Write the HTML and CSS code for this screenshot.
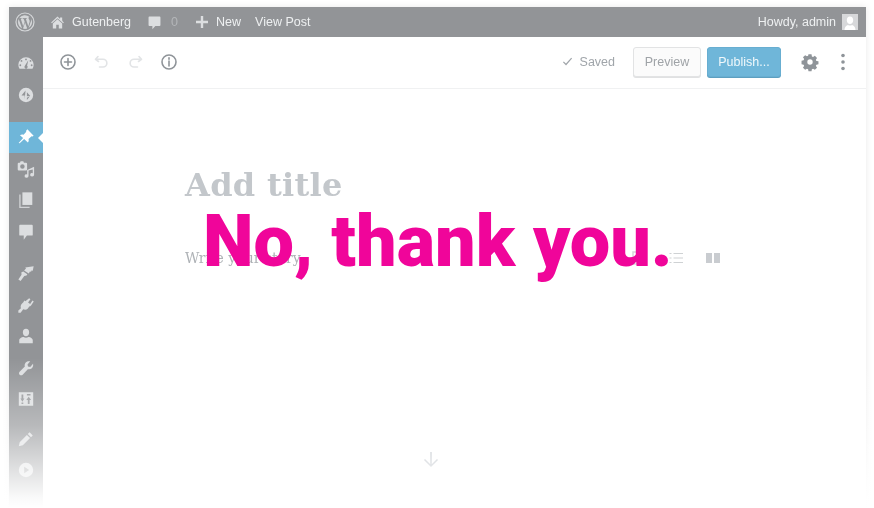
FILE: index.html
```html
<!DOCTYPE html>
<html lang="en">
<head>
<meta charset="utf-8">
<title>Gutenberg</title>
<link rel="stylesheet" href="styles.css">
</head>
<body>
<div class="window">
  <header class="adminbar">
    <svg class="wp" viewBox="0 0 20 20"><circle cx="10" cy="10" r="9" fill="none" stroke="#d5d7d9" stroke-width="1.2"/><path fill="#d5d7d9" d="M3 10c0 2.8 1.6 5.2 4 6.3L3.700 7.100A7 7 0 0 0 3 10zm11.700-.4c0-.9-.3-1.500-.6-2-.3-.6-.6-1-.6-1.500 0-.6.400-1.100 1-1.100h.1A7 7 0 0 0 4.100 6.200h.5c.7 0 1.900-.1 1.900-.1.400 0 .4.500 0 .6 0 0-.4.100-.8.100l2.500 7.500 1.500-4.600-1.100-2.900c-.4 0-.7-.1-.7-.1-.4 0-.3-.6 0-.6 0 0 1.100.1 1.800.1s1.900-.1 1.900-.1c.4 0 .4.500 0 .6 0 0-.4.100-.8.100l2.500 7.400.7-2.300c.3-1 .6-1.700.6-2.300zm-4.600 1-2.100 6a7 7 0 0 0 4.300-.1l-.1-.1zm6-3.900.1.700c0 .7-.1 1.500-.5 2.500l-2.100 6.200A7 7 0 0 0 16.100 6.700z"/></svg>
    <nav class="bar-left">
      <span class="bar-item home"><svg class="bar-icon" viewBox="0 0 20 20"><path d="M16 8.500l1.500 1.500-.9 1L10 4.900 3.400 11l-.9-1L10 3l3 2.800V4h2.500v3.400zM10 6.300l5.500 5V17h-4v-4.500h-3V17h-4v-5.700z"/></svg>Gutenberg</span>
      <span class="bar-item comments"><svg class="bar-icon" viewBox="0 0 20 20"><path d="M4 3h12a1 1 0 0 1 1 1v9a1 1 0 0 1-1 1h-5l-3.500 4v-4H4a1 1 0 0 1-1-1V4a1 1 0 0 1 1-1z"/></svg><span class="count">0</span></span>
      <span class="bar-item new"><svg class="bar-icon small" viewBox="0 0 14 14"><path d="M5.800 1h2.400v4.800H13v2.400H8.200V13H5.800V8.200H1V5.800h4.800z"/></svg>New</span>
      <span class="bar-item">View Post</span>
    </nav>
    <div class="howdy">Howdy, admin
      <svg class="avatar" viewBox="0 0 16 16"><rect width="16" height="16" fill="#d7d8da"/><path fill="#fff" d="M8 2.500a3.200 3.800 0 0 1 3.200 3.800c0 2.100-1.400 3.700-3.200 3.700S4.800 8.400 4.800 6.300A3.200 3.800 0 0 1 8 2.500zM2.500 16c0-3 2-4.500 3.500-5 1 .7 3 .7 4 0 1.500.5 3.500 2 3.500 5z"/></svg>
    </div>
  </header>
  <div class="body">
    <aside class="sidebar">
      <div class="menu-group">
        <div class="menu-item"><svg viewBox="0 0 20 20"><path d="M10 3.500a8.500 8.500 0 0 0-8.500 8.500c0 1.700.5 3.200 1.300 4.500h14.400c.8-1.300 1.300-2.800 1.300-4.500A8.500 8.500 0 0 0 10 3.500zM10 5a1 1 0 1 1 0 2 1 1 0 0 1 0-2zM5 6.700a1 1 0 1 1 0 2 1 1 0 0 1 0-2zm10 0a1 1 0 1 1 0 2 1 1 0 0 1 0-2zM3.700 11.500a1 1 0 1 1 0 2 1 1 0 0 1 0-2zm12.600 0a1 1 0 1 1 0 2 1 1 0 0 1 0-2zM12.500 7l-1.300 6a1.800 1.800 0 1 1-2.400.1z"/></svg></div>
        <div class="menu-item"><svg viewBox="0 0 20 20"><path fill-rule="evenodd" d="M10 2a8 8 0 1 1 0 16 8 8 0 0 1 0-16zM9.500 5 5 10.500h3.500v4.500zm1.500 2v4.500l3.800-.5zM11 13v2.500l3.500-4.500z"/></svg></div>
      </div>
      <div class="menu-group">
        <div class="menu-item active"><svg viewBox="0 0 20 20"><path d="M11.500 1.500l7 7-1.300 1-1-.4-3.400 3.100c.5 1.500.2 2.800-.7 3.800L7.900 12.100 3 17l-1.200-.2 5-5.600L3.300 8.100c1-1 2.600-1.300 4-.7l3-3.300-.3-.9z"/></svg></div>
        <div class="menu-item"><svg viewBox="0 0 20 20"><path fill-rule="evenodd" d="M4 1.500h3l.7 1.500H10a1.200 1.200 0 0 1 1.200 1.200V10.500a1.200 1.200 0 0 1-1.200 1.200H2A1.200 1.200 0 0 1 .8 10.500V4.200A1.200 1.200 0 0 1 2 3h1.300zM6 4.800a2.500 2.500 0 1 0 0 5 2.500 2.500 0 0 0 0-5z"/><path d="M19 7.500v8.800a2.200 1.900 0 1 1-1.500-1.700V10.500l-4.700 1.300v6a2.200 1.900 0 1 1-1.500-1.700v-5z"/></svg></div>
        <div class="menu-item"><svg viewBox="0 0 20 20"><path d="M6 1.500h11v14H6z"/><path d="M4 4v13.500h10V19H2.500V4z" opacity=".85"/></svg></div>
        <div class="menu-item"><svg viewBox="0 0 20 20"><path d="M3.500 2h13a1 1 0 0 1 1 1v10a1 1 0 0 1-1 1H11l-3.500 4.500V14h-4a1 1 0 0 1-1-1V3a1 1 0 0 1 1-1z"/></svg></div>
      </div>
      <div class="menu-group">
        <div class="menu-item"><svg viewBox="0 0 20 20"><path d="M18.500 2.500l-1 5-1.500-.3-.3 1.500-1.400-.5-1.200 2.400-5.200-3.500L10 5l-.8-1z"/><path d="M7 8.200l4.500 3.100-.9 1.500-2.500.5L4 18.800l-2.500-1.600L5 12l-.1-2.700z"/></svg></div>
        <div class="menu-item"><svg viewBox="0 0 20 20"><path d="M13.500 2.500l1.400 1-2.600 3.700 2.300 1.600 2.600-3.700 1.400 1-3 4.400c-.5.800-1.300 1.100-2 1.100l-1.500 2.200c-1.500 1.600-3.500 1.800-5.200.9L4 18.500H1.500v-2.400l2.900-2.600C3.700 12 4 10 5.400 8.600l1.900-1.800c.1-.7.400-1.400 1-1.800l1 .7z"/></svg></div>
        <div class="menu-item"><svg viewBox="0 0 20 20"><path d="M10 2a3.500 4 0 0 1 3.500 4c0 2.300-1.600 4.200-3.500 4.200S6.500 8.300 6.500 6A3.500 4 0 0 1 10 2zM2.500 18v-3.300c0-1.600 2.700-3.500 4.800-3.500.8.500 1.700.8 2.700.8s1.900-.3 2.700-.8c2.100 0 4.800 1.900 4.800 3.500V18z"/></svg></div>
        <div class="menu-item"><svg viewBox="0 0 20 20"><path d="M17.800 5.300c.5 1.800 0 3.700-1.300 5-1.200 1.100-3 1.500-4.500 1L6.300 17.500c-.9.900-2.500.9-3.400 0s-.9-2.500 0-3.400l5.800-5.700c-.5-1.500-.1-3.300 1-4.500 1.300-1.300 3.200-1.800 5-1.300L11.700 6l.5 2.400 2.500.5z"/></svg></div>
        <div class="menu-item"><svg viewBox="0 0 20 20"><path fill-rule="evenodd" d="M2 2.500h16v15H2zM5 5v4.500H3.800L6 13l2.200-3.500H7V5zm7 10.500h2V11h1.700L13 7.500 10.300 11H12zM5 14v1.500h2V14zM11 4.500V6h4V4.500z"/></svg></div>
      </div>
      <div class="menu-group tail">
        <div class="menu-item"><svg viewBox="0 0 20 20"><path d="M14 2.500l3.500 3.500-2 2-3.500-3.500zM11 5.500l3.500 3.500-8 8-4.500 1 1-4.500z"/></svg></div>
        <div class="menu-item"><svg viewBox="0 0 20 20"><path fill-rule="evenodd" d="M10 2a8 8 0 1 1 0 16 8 8 0 0 1 0-16zM8 6.500v7l5.500-3.500z"/></svg></div>
      </div>
    </aside>
    <main class="editor">
      <div class="toolbar">
        <div class="tools">
          <svg class="tool" viewBox="0 0 20 20"><circle cx="10" cy="10" r="7"/><path d="M10 6.500v7M6.500 10h7"/></svg>
          <svg class="tool faint" viewBox="0 0 20 20"><path d="M6 4.500 3.500 7.300 6.500 9.500M3.500 7.300h7.500a3.800 3.800 0 0 1 0 7.700H7.500"/></svg>
          <svg class="tool faint" viewBox="0 0 20 20"><path d="M14 4.500l2.500 2.800-3 2.200M16.500 7.300H9a3.800 3.800 0 0 0 0 7.700h3.500"/></svg>
          <svg class="tool" viewBox="0 0 20 20"><circle cx="10" cy="10" r="7"/><path d="M10 9v5M10 5.700v1.500"/></svg>
        </div>
        <div class="actions">
          <span class="saved"><svg class="check" viewBox="0 0 14 12"><path d="M1.500 6.500l3.500 3.500 7.500-8.500"/></svg>Saved</span>
          <button class="btn preview">Preview</button>
          <button class="btn publish">Publish...</button>
          <svg class="gear" viewBox="0 0 20 20"><path fill-rule="evenodd" d="M8.300 1.500h3.400l.4 2.300 1.300.6 2-1.300 2.400 2.400-1.300 2 .6 1.300 2.300.4v3.400l-2.300.4-.6 1.300 1.300 2-2.400 2.400-2-1.300-1.300.6-.4 2.300H8.300l-.4-2.300-1.300-.6-2 1.300-2.400-2.400 1.300-2-.6-1.300-2.300-.4V8.500l2.300-.4.6-1.300-1.300-2 2.400-2.400 2 1.300 1.300-.6zM10 7a3 3 0 1 0 0 6 3 3 0 0 0 0-6z" transform="translate(1 1) scale(.9)"/></svg>
          <svg class="dots" viewBox="0 0 4 18"><circle cx="2" cy="2.500" r="1.800"/><circle cx="2" cy="9" r="1.800"/><circle cx="2" cy="15.500" r="1.800"/></svg>
        </div>
      </div>
      <div class="content">
        <h1 class="title">Add title</h1>
        <div class="para">
          <p class="placeholder">Write your story</p>
          <div class="para-icons">
            <svg class="image-icon" viewBox="0 0 14 14"><path d="M1 1h12v12H1z"/></svg>
            <svg class="list-icon" viewBox="0 0 14 12"><path d="M4.500 1.500H14M4.500 6H14M4.500 10.500H14M.500 1.500H2.500M.500 6H2.500M.500 10.500H2.500"/></svg>
            <svg class="col-icon" viewBox="0 0 14 10"><path d="M0 0h6v10H0zM8 0h6v10H8z"/></svg>
          </div>
        </div>
        <svg class="arrow" viewBox="0 0 18 18"><path d="M9 2v14M2.500 9.500 9 16l6.500-6.500"/></svg>
      </div>
    </main>
  </div>
</div>
<div class="fade"></div>
<div class="banner">No, thank you.</div>
</body>
</html>
```
FILE: styles.css
```css
* { box-sizing: border-box; }
html, body { margin: 0; height: 100%; background: #fff; overflow: hidden; }
body { font-family: "Liberation Sans", Arial, sans-serif; position: relative; }

.window {
  margin: 7px 8px 0 9px;
  height: 501px;
  display: flex;
  flex-direction: column;
  background: #fff;
  box-shadow: 0 0 7px rgba(0, 0, 0, .09);
  filter: blur(.35px);
}

.adminbar {
  height: 30px;
  flex: none;
  display: flex;
  align-items: center;
  background: #929497;
  color: #eef0f1;
  font-size: 12.5px;
  padding: 0 8px 0 6px;
}
.wp { width: 20px; height: 20px; margin-right: 15px; }
.bar-left { display: flex; align-items: center; }
.bar-item { display: flex; align-items: center; }
.bar-icon { width: 17px; height: 17px; fill: #dcdee0; margin-right: 6px; margin-left: -1px; }
.bar-icon.small { width: 14px; height: 14px; margin: 0 7px 0 0; }
.home { margin-right: 15px; }
.comments { margin-right: 17px; }
.comments .bar-icon { margin-right: 8px; margin-left: 0; }
.count { color: #b4b6b9; }
.new { margin-right: 14px; }
.howdy { margin-left: auto; display: flex; align-items: center; gap: 6px; }
.avatar { width: 16px; height: 16px; }

.body { flex: 1; display: flex; min-height: 0; }

.sidebar {
  width: 34px;
  flex: none;
  background: #929497;
  padding-top: 10.5px;
}
.menu-group { margin-bottom: 11px; }
.menu-group + .menu-group + .menu-group { margin-bottom: 9px; margin-top: -1px; }
.menu-item {
  height: 31.5px;
  display: flex;
  align-items: center;
  justify-content: center;
  position: relative;
}
.menu-item svg { width: 18px; height: 18px; fill: #dcdee0; }
.menu-item.active { background: #6fb6d9; }
.menu-item.active svg { fill: #fff; }
.menu-item.active::after {
  content: "";
  position: absolute;
  right: 0;
  top: 11px;
  border: 5px solid transparent;
  border-left-width: 0;
  border-right-color: #fff;
}

.editor { flex: 1; display: flex; flex-direction: column; min-width: 0; background: #fff; }

.toolbar {
  height: 52px;
  flex: none;
  display: flex;
  align-items: center;
  justify-content: space-between;
  border-bottom: 1px solid #f0f1f2;
  padding: 0 15px 2px 15px;
}
.tools { display: flex; gap: 13.500px; }
.tool { width: 20px; height: 20px; fill: none; stroke: #8f9499; stroke-width: 1.600; stroke-linecap: round; stroke-linejoin: round; }
.tool.faint { stroke: #e2e4e6; }
.actions { display: flex; align-items: center; }
.saved { display: flex; align-items: center; color: #a0a5aa; font-size: 12.5px; margin-right: 18px; }
.check { width: 11px; height: 9px; margin-right: 7px; fill: none; stroke: #a0a5aa; stroke-width: 1.600; }
.btn {
  font: inherit;
  font-size: 12.5px;
  height: 30px;
  border-radius: 3px;
  padding: 0;
}
.preview {
  width: 68px;
  background: #fbfbfb;
  color: #9fa3a7;
  border: 1px solid #e2e3e4;
  box-shadow: 0 1px 0 #e0e1e2;
  margin-right: 6px;
}
.publish {
  width: 74px;
  background: #6fb6d9;
  color: #f0f8fb;
  border: 1px solid #68aed1;
  box-shadow: 0 1px 0 #5d9fc0;
  margin-right: 19px;
}
.gear { width: 20px; height: 20px; fill: #8f9499; margin-right: 21px; }
.dots { width: 4px; height: 18px; fill: #8f9499; margin-right: 6px; }

.content { flex: 1; position: relative; display: flex; flex-direction: column; padding: 76px 0 0 142px; }
.title {
  margin: 0;
  font-family: "DejaVu Serif", serif;
  font-weight: 700;
  font-size: 32px;
  letter-spacing: .3px;
  line-height: 40px;
  color: #c3c7cb;
}
.para { margin-top: 40px; display: flex; align-items: center; height: 26px; padding-right: 146px; justify-content: space-between; }
.placeholder {
  margin: 0;
  font-family: "DejaVu Serif", serif;
  font-size: 14px;
  color: #aeb2b6;
}
.para-icons { display: flex; align-items: center; gap: 23px; }
.image-icon { width: 14px; height: 14px; fill: none; stroke: #d5d7d9; stroke-width: 1.500; }
.list-icon { width: 14px; height: 12px; fill: none; stroke: #cfd2d4; stroke-width: 1.200; }
.col-icon { width: 14px; height: 10px; fill: #c9ccd0; }

.arrow {
  position: absolute;
  left: 379px;
  top: 361px;
  width: 18px;
  height: 18px;
  fill: none;
  stroke: #a8afb8;
  stroke-width: 1.500;
}

.fade {
  position: absolute;
  left: 0;
  right: 0;
  bottom: 0;
  height: 150px;
  pointer-events: none;
  background: linear-gradient(to bottom, rgba(255,255,255,0), rgba(255,255,255,.35) 45%, rgba(255,255,255,.95) 93%, #fff);
}

.banner {
  position: absolute;
  left: 203px;
  top: 199px;
  font-family: Roboto, sans-serif;
  font-weight: 900;
  font-size: 72px;
  line-height: 86px;
  white-space: nowrap;
  color: #f0059a;
}
```
